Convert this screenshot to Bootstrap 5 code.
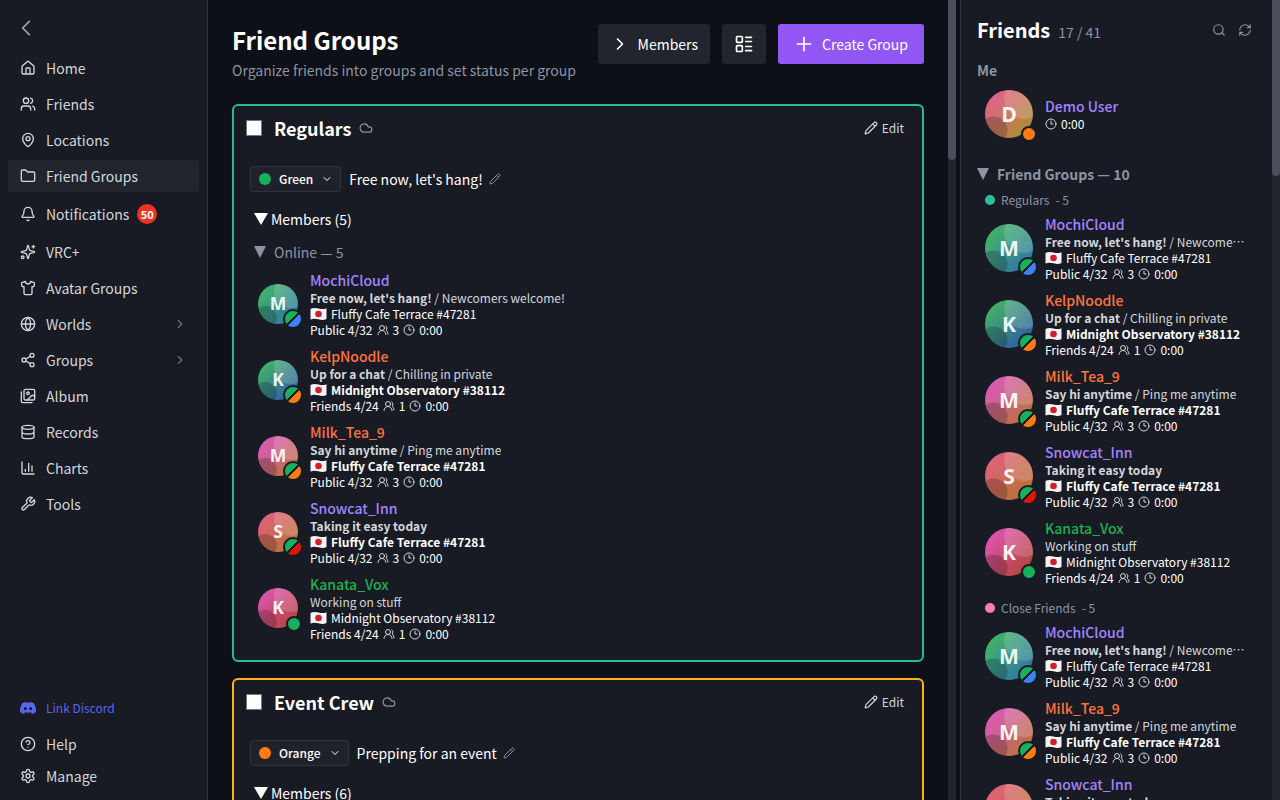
<!DOCTYPE html>
<html lang="en" data-bs-theme="dark">
<head>
<meta charset="utf-8">
<meta name="viewport" content="width=device-width, initial-scale=1">
<title>Friend Groups</title>
<link href="https://cdn.jsdelivr.net/npm/bootstrap@5.3.0/dist/css/bootstrap.min.css" rel="stylesheet">
<style>
:root{--panel:#181b23;--base:#0d1017;--raised:#22252d;--line:#30333c;--muted:#8d93a3;--soft:#d4d6dc}
body{font-family:"Noto Sans CJK JP",sans-serif;font-size:14px;line-height:20px;background:var(--base);color:#fff}
h1,h2,h3,p{margin:0}
.ico{width:16px;height:16px;flex:none;fill:none;stroke:currentColor;stroke-width:2;stroke-linecap:round;stroke-linejoin:round}
.ico-14{width:14px;height:14px}
.ico-12{width:12px;height:12px}
.ico-20{width:20px;height:20px}
.ico-solid{fill:currentColor;stroke:none}
.tri{width:14px;height:12px;flex:none;fill:currentColor}
.tri-sm{width:12px}
.plain{background:none;border:0;padding:0}
.soft{color:var(--soft)}
.muted{color:var(--muted)}

.side{width:208px;background:var(--panel);border-right:1px solid var(--line);padding:16px 8px 8px}
.collapse-btn{height:24px;margin-bottom:8px;color:#a2a5af}
.side-link{display:flex;align-items:center;gap:10px;min-height:32px;padding:0 12px;border-radius:3px;color:var(--soft);text-decoration:none}
.side-link.active{background:var(--raised)}
.side-link.tall{min-height:36px}
.side-link.discord{color:#5865f2;font-size:12px}
.chev{color:#6c707c}
.count{width:20px;height:20px;border-radius:50%;background:#ee3324;color:#fff;font-size:11px;font-weight:700;line-height:20px;text-align:center;margin-left:-2px}

.scroller{overflow-y:auto;scrollbar-width:none;min-width:0}
.scroller::-webkit-scrollbar{display:none}
.rail{width:8px;flex:none;background:#22252d}
.rail-thumb{background:#4a4f5b;border-radius:0 0 4px 4px}
.rail-main{margin-right:4px}

.head-title{font-size:24px;line-height:32px;font-weight:700}
.head-text{line-height:24px;padding-top:2px;margin-bottom:-2px}
.head-btns{gap:12px}
.head-btn{height:40px;border:0;border-radius:3px;background:var(--raised);color:#fff;display:flex;align-items:center;gap:8px;padding:0 12px;white-space:nowrap}
.head-btn.primary{background:#9256f5;padding:0 16px}
.group-card{background:var(--panel);border:2px solid var(--edge);border-radius:6px;padding:0 16px 14px}
.group-head{height:44px;margin:0 2px 0 -4px}
.group-name{font-size:18px;line-height:24px;font-weight:700}
.edit-btn{font-size:12px}
.tick{appearance:none;width:16px;height:16px;background:#fff;border:1px solid #767676;margin:0;flex:none}
.status-btn{height:26px;padding:0 7px 0 8px;border:1px solid var(--line);border-radius:3px;background:#1f222a;color:#fff;font-size:12px;font-weight:500;display:flex;align-items:center;gap:8px}
.status-row{height:48px;padding-top:10px;margin-bottom:11px;gap:8px}
.status-text{gap:6px}
.dot{width:12px;height:12px;border-radius:50%;flex:none;background:currentColor}
.dot-sm{width:10px;height:10px}
details>summary{list-style:none;display:flex;align-items:center}
details>summary::-webkit-details-marker{display:none}
.members{gap:3px}
.online{margin-top:13px}
.list-main{margin-top:4px}

.friend{display:flex;align-items:center;gap:12px;padding:4px 8px;font-size:12px;line-height:16px}
.face{position:relative;width:40px;height:40px;flex:none}
.face>svg{display:block;width:100%;height:100%}
.face text{font-family:"Open Sans",sans-serif;font-size:44px;font-weight:700;fill:#fff;fill-opacity:.92;text-anchor:middle}
.friends .face{width:48px;height:48px}
.state{position:absolute;right:-4px;bottom:-4px;width:16px;height:16px;border-radius:50%;border:2px solid var(--panel);background:currentColor}
.state.split{right:-5px;bottom:-5px;width:20px;height:20px;background:linear-gradient(135deg,#17b05e 0 45%,var(--panel) 46% 54%,currentColor 55%)}
.who{font-size:14px;line-height:20px;font-weight:500}
.info{min-width:0}
.place,.meta{display:flex;align-items:center;gap:4px;white-space:nowrap}
.flag{width:17px;height:16px;flex:none}
.green{color:#17b05e}.blue{color:#3b82f6}.orange{color:#ff7b14}.red{color:#e01507}
.known{color:#a284ff}.trusted{color:#ff7340}.newer{color:#1eb04c}

.friends{width:320px;flex:none;background:var(--panel);border-left:1px solid var(--line)}
.friends-title{font-size:20px;line-height:28px;font-weight:700}
.me-label{font-size:14px;line-height:20px;font-weight:700;margin:16px 0 6px}
.me-row{margin-bottom:21px}
.set-title{line-height:22px;font-weight:700}
.sub{font-size:12px;line-height:18px;padding:6px 8px 1px;gap:6px}
.group-set{margin-bottom:3px}
</style>
<script src="https://cdn.jsdelivr.net/npm/bootstrap@5.3.0/dist/js/bootstrap.bundle.min.js" defer></script>
</head>
<body class="vh-100 overflow-hidden">
<svg class="position-absolute" width="0" height="0" aria-hidden="true">
<defs>
<linearGradient id="gm" x2="1" y2="1"><stop offset=".1" stop-color="#43b563"/><stop offset=".9" stop-color="#2f74a6"/></linearGradient>
<linearGradient id="gk" x2="1" y2="1"><stop offset=".1" stop-color="#43b563"/><stop offset=".9" stop-color="#2e5aa8"/></linearGradient>
<linearGradient id="gt" x2="1" y2="1"><stop offset=".1" stop-color="#dc58bd"/><stop offset=".9" stop-color="#b8743a"/></linearGradient>
<linearGradient id="gs" x2="1" y2="1"><stop offset=".1" stop-color="#e2607c"/><stop offset=".9" stop-color="#b57434"/></linearGradient>
<linearGradient id="gv" x2="1" y2="1"><stop offset=".1" stop-color="#de55b6"/><stop offset=".9" stop-color="#b54438"/></linearGradient>
<linearGradient id="gd" x2="1" y2="1"><stop offset=".1" stop-color="#e46090"/><stop offset=".9" stop-color="#ab8e2e"/></linearGradient>
<clipPath id="disc"><circle cx="50" cy="50" r="50"/></clipPath>
</defs>
<symbol id="shade" viewBox="0 0 100 100"><g clip-path="url(#disc)"><circle cx="82" cy="18" r="42" fill="#fff" opacity=".17"/><circle cx="18" cy="84" r="29" fill="#000" opacity=".2"/></g></symbol>
<symbol id="home" viewBox="0 0 24 24"><path d="M15 21v-8a1 1 0 0 0-1-1h-4a1 1 0 0 0-1 1v8M3 10a2 2 0 0 1 .709-1.528l7-5.999a2 2 0 0 1 2.582 0l7 5.999A2 2 0 0 1 21 10v9a2 2 0 0 1-2 2H5a2 2 0 0 1-2-2z"/></symbol>
<symbol id="users" viewBox="0 0 24 24"><path d="M16 21v-2a4 4 0 0 0-4-4H6a4 4 0 0 0-4 4v2M22 21v-2a4 4 0 0 0-3-3.87M16 3.13a4 4 0 0 1 0 7.75"/><circle cx="9" cy="7" r="4"/></symbol>
<symbol id="people" viewBox="0 0 24 24"><path d="M18 21a8 8 0 0 0-16 0M22 20c0-3.37-2-6.5-4-8a5 5 0 0 0-.45-8.3"/><circle cx="10" cy="8" r="5"/></symbol>
<symbol id="pin" viewBox="0 0 24 24"><path d="M20 10c0 4.993-5.539 10.193-7.399 11.799a1 1 0 0 1-1.202 0C9.539 20.193 4 14.993 4 10a8 8 0 0 1 16 0"/><circle cx="12" cy="10" r="3"/></symbol>
<symbol id="folder" viewBox="0 0 24 24"><path d="M20 20a2 2 0 0 0 2-2V8a2 2 0 0 0-2-2h-7.9a2 2 0 0 1-1.69-.9L9.6 3.9A2 2 0 0 0 7.93 3H4a2 2 0 0 0-2 2v13a2 2 0 0 0 2 2Z"/></symbol>
<symbol id="bell" viewBox="0 0 24 24"><path d="M10.268 21a2 2 0 0 0 3.464 0M3.262 15.326A1 1 0 0 0 4 17h16a1 1 0 0 0 .74-1.673C19.41 13.956 18 12.499 18 8A6 6 0 0 0 6 8c0 4.499-1.411 5.956-2.738 7.326"/></symbol>
<symbol id="sparkles" viewBox="0 0 24 24"><path d="M9.937 15.5A2 2 0 0 0 8.5 14.063l-6.135-1.582a.5.5 0 0 1 0-.962L8.5 9.936A2 2 0 0 0 9.937 8.5l1.582-6.135a.5.5 0 0 1 .963 0L14.063 8.5A2 2 0 0 0 15.5 9.937l6.135 1.581a.5.5 0 0 1 0 .964L15.5 14.063a2 2 0 0 0-1.437 1.437l-1.582 6.135a.5.5 0 0 1-.963 0zM20 2v4M22 4h-4"/><circle cx="4" cy="20" r="2"/></symbol>
<symbol id="shirt" viewBox="0 0 24 24"><path d="M20.38 3.46 16 2a4 4 0 0 1-8 0L3.62 3.46a2 2 0 0 0-1.34 2.23l.58 3.47a1 1 0 0 0 .99.84H6v10c0 1.1.9 2 2 2h8a2 2 0 0 0 2-2V10h2.15a1 1 0 0 0 .99-.84l.58-3.47a2 2 0 0 0-1.34-2.23z"/></symbol>
<symbol id="globe" viewBox="0 0 24 24"><circle cx="12" cy="12" r="10"/><path d="M12 2a14.5 14.5 0 0 0 0 20 14.5 14.5 0 0 0 0-20M2 12h20"/></symbol>
<symbol id="share" viewBox="0 0 24 24"><circle cx="18" cy="5" r="3"/><circle cx="6" cy="12" r="3"/><circle cx="18" cy="19" r="3"/><path d="m8.59 13.51 6.83 3.98M15.41 6.51l-6.82 3.98"/></symbol>
<symbol id="images" viewBox="0 0 24 24"><path d="M18 22H4a2 2 0 0 1-2-2V6M22 13l-1.296-1.296a2.41 2.41 0 0 0-3.408 0L11 18"/><circle cx="12" cy="8" r="2"/><rect width="16" height="16" x="6" y="2" rx="2"/></symbol>
<symbol id="database" viewBox="0 0 24 24"><ellipse cx="12" cy="5" rx="9" ry="3"/><path d="M3 5v14a9 3 0 0 0 18 0V5M3 12a9 3 0 0 0 18 0"/></symbol>
<symbol id="chart" viewBox="0 0 24 24"><path d="M3 3v16a2 2 0 0 0 2 2h16M18 17V9M13 17V5M8 17v-3"/></symbol>
<symbol id="wrench" viewBox="0 0 24 24"><path d="M14.7 6.3a1 1 0 0 0 0 1.4l1.6 1.6a1 1 0 0 0 1.4 0l3.77-3.77a6 6 0 0 1-7.94 7.94l-6.91 6.91a2.12 2.12 0 0 1-3-3l6.91-6.91a6 6 0 0 1 7.94-7.94l-3.76 3.76z"/></symbol>
<symbol id="help" viewBox="0 0 24 24"><circle cx="12" cy="12" r="10"/><path d="M9.09 9a3 3 0 0 1 5.83 1c0 2-3 3-3 3M12 17h.01"/></symbol>
<symbol id="gear" viewBox="0 0 24 24"><path d="M12.22 2h-.44a2 2 0 0 0-2 2v.18a2 2 0 0 1-1 1.73l-.43.25a2 2 0 0 1-2 0l-.15-.08a2 2 0 0 0-2.73.73l-.22.38a2 2 0 0 0 .73 2.73l.15.1a2 2 0 0 1 1 1.72v.51a2 2 0 0 1-1 1.74l-.15.09a2 2 0 0 0-.73 2.73l.22.38a2 2 0 0 0 2.73.73l.15-.08a2 2 0 0 1 2 0l.43.25a2 2 0 0 1 1 1.73V20a2 2 0 0 0 2 2h.44a2 2 0 0 0 2-2v-.18a2 2 0 0 1 1-1.73l.43-.25a2 2 0 0 1 2 0l.15.08a2 2 0 0 0 2.73-.73l.22-.39a2 2 0 0 0-.73-2.73l-.15-.08a2 2 0 0 1-1-1.74v-.5a2 2 0 0 1 1-1.74l.15-.09a2 2 0 0 0 .73-2.73l-.22-.38a2 2 0 0 0-2.73-.73l-.15.08a2 2 0 0 1-2 0l-.43-.25a2 2 0 0 1-1-1.73V4a2 2 0 0 0-2-2z"/><circle cx="12" cy="12" r="3"/></symbol>
<symbol id="discord" viewBox="0 0 24 24"><path d="M20.317 4.3698a19.7913 19.7913 0 00-4.8851-1.5152.0741.0741 0 00-.0785.0371c-.211.3753-.4447.8648-.6083 1.2495-1.8447-.2762-3.68-.2762-5.4868 0-.1636-.3933-.4058-.8742-.6177-1.2495a.077.077 0 00-.0785-.037 19.7363 19.7363 0 00-4.8852 1.515.0699.0699 0 00-.0321.0277C.5334 9.0458-.319 13.5799.0992 18.0578a.0824.0824 0 00.0312.0561c2.0528 1.5076 4.0413 2.4228 5.9929 3.0294a.0777.0777 0 00.0842-.0276c.4616-.6304.8731-1.2952 1.226-1.9942a.076.076 0 00-.0416-.1057c-.6528-.2476-1.2743-.5495-1.8722-.8923a.077.077 0 01-.0076-.1277c.1258-.0943.2517-.1923.3718-.2914a.0743.0743 0 01.0776-.0105c3.9278 1.7933 8.18 1.7933 12.0614 0a.0739.0739 0 01.0785.0095c.1202.099.246.1981.3728.2924a.077.077 0 01-.0066.1276 12.2986 12.2986 0 01-1.873.8914.0766.0766 0 00-.0407.1067c.3604.698.7719 1.3628 1.225 1.9932a.076.076 0 00.0842.0286c1.961-.6067 3.9495-1.5219 6.0023-3.0294a.077.077 0 00.0313-.0552c.5004-5.177-.8382-9.6739-3.5485-13.6604a.061.061 0 00-.0312-.0286zM8.02 15.3312c-1.1825 0-2.1569-1.0857-2.1569-2.419 0-1.3332.9555-2.4189 2.157-2.4189 1.2108 0 2.1757 1.0952 2.1568 2.419 0 1.3332-.9555 2.4189-2.1569 2.4189zm7.9748 0c-1.1825 0-2.1569-1.0857-2.1569-2.419 0-1.3332.9554-2.4189 2.1569-2.4189 1.2108 0 2.1757 1.0952 2.1568 2.419 0 1.3332-.946 2.4189-2.1568 2.4189Z"/></symbol>
<symbol id="left" viewBox="0 0 24 24"><path d="m16 20-8-8 8-8"/></symbol>
<symbol id="right" viewBox="0 0 24 24"><path d="m9 18 6-6-6-6"/></symbol>
<symbol id="down" viewBox="0 0 24 24"><path d="m6 9 6 6 6-6"/></symbol>
<symbol id="plus" viewBox="0 0 24 24"><path d="M4 12h16M12 4v16"/></symbol>
<symbol id="layout" viewBox="0 0 24 24"><rect width="7" height="7" x="3" y="3" rx="1"/><rect width="7" height="7" x="3" y="14" rx="1"/><path d="M14 4h7M14 9h7M14 15h7M14 20h7"/></symbol>
<symbol id="cloud" viewBox="0 0 24 24"><path d="M17.5 19H9a7 7 0 1 1 6.71-9h1.79a4.5 4.5 0 1 1 0 9Z"/></symbol>
<symbol id="pencil" viewBox="0 0 24 24"><path d="M21.174 6.812a1 1 0 0 0-3.986-3.987L3.842 16.174a2 2 0 0 0-.5.83l-1.321 4.352a.5.5 0 0 0 .623.622l4.353-1.32a2 2 0 0 0 .83-.497zM15 5l4 4"/></symbol>
<symbol id="search" viewBox="0 0 24 24"><circle cx="11" cy="11" r="8"/><path d="m21 21-4.3-4.3"/></symbol>
<symbol id="refresh" viewBox="0 0 24 24"><path d="M3 12a9 9 0 0 1 9-9 9.75 9.75 0 0 1 6.74 2.74L21 8M21 3v5h-5M21 12a9 9 0 0 1-9 9 9.75 9.75 0 0 1-6.74-2.74L3 16M8 16H3v5"/></symbol>
<symbol id="clock" viewBox="0 0 24 24"><circle cx="12" cy="12" r="10"/><path d="M12 6v6h4"/></symbol>
<symbol id="tri" viewBox="0 0 14 12" preserveAspectRatio="none"><path d="M0 0h14L7 12z"/></symbol>
<symbol id="jp" viewBox="0 0 17 16"><path d="M.5 3C3 1.500 5.500 1.700 8.500 2.500s5.500.8 8-.3v10.800c-2.500 1.300-5 1.100-8 .3s-5.500-.9-8 .3z" fill="#f4f4f6"/><circle cx="8.500" cy="8" r="3.300" fill="#d0202e"/></symbol>
</svg>

<div class="d-flex h-100">
<nav class="side d-flex flex-column flex-shrink-0" aria-label="Main">
  <button class="plain collapse-btn d-flex align-items-center ps-2" aria-label="Collapse"><svg class="ico ico-20"><use href="#left"/></svg></button>
  <div class="d-flex flex-column gap-1 mt-1">
    <a class="side-link" href="#"><svg class="ico"><use href="#home"/></svg>Home</a>
    <a class="side-link" href="#"><svg class="ico"><use href="#users"/></svg>Friends</a>
    <a class="side-link" href="#"><svg class="ico"><use href="#pin"/></svg>Locations</a>
    <a class="side-link active" href="#"><svg class="ico"><use href="#folder"/></svg>Friend Groups</a>
    <a class="side-link tall" href="#"><svg class="ico"><use href="#bell"/></svg>Notifications<span class="count">50</span></a>
    <a class="side-link" href="#"><svg class="ico"><use href="#sparkles"/></svg>VRC+</a>
    <a class="side-link" href="#"><svg class="ico"><use href="#shirt"/></svg>Avatar Groups</a>
    <a class="side-link" href="#"><svg class="ico"><use href="#globe"/></svg>Worlds<svg class="ico ico-14 chev ms-auto"><use href="#right"/></svg></a>
    <a class="side-link" href="#"><svg class="ico"><use href="#share"/></svg>Groups<svg class="ico ico-14 chev ms-auto"><use href="#right"/></svg></a>
    <a class="side-link" href="#"><svg class="ico"><use href="#images"/></svg>Album</a>
    <a class="side-link" href="#"><svg class="ico"><use href="#database"/></svg>Records</a>
    <a class="side-link" href="#"><svg class="ico"><use href="#chart"/></svg>Charts</a>
    <a class="side-link" href="#"><svg class="ico"><use href="#wrench"/></svg>Tools</a>
  </div>
  <div class="mt-auto">
    <a class="side-link discord mb-1" href="#"><svg class="ico ico-solid"><use href="#discord"/></svg>Link Discord</a>
    <a class="side-link" href="#"><svg class="ico"><use href="#help"/></svg>Help</a>
    <a class="side-link" href="#"><svg class="ico"><use href="#gear"/></svg>Manage</a>
  </div>
</nav>

<main class="scroller flex-grow-1 p-4">
  <header class="d-flex align-items-start justify-content-between mb-4">
    <div><h1 class="head-title">Friend Groups</h1><p class="head-text muted">Organize friends into groups and set status per group</p></div>
    <div class="head-btns d-flex">
      <button class="head-btn"><svg class="ico ico-20"><use href="#right"/></svg>Members</button>
      <button class="head-btn" aria-label="Layout"><svg class="ico ico-20"><use href="#layout"/></svg></button>
      <button class="head-btn primary"><svg class="ico ico-20"><use href="#plus"/></svg>Create Group</button>
    </div>
  </header>

  <section class="group-card mb-3" style="--edge:#27b999">
    <div class="group-head d-flex align-items-center">
      <input class="tick" type="checkbox" aria-label="Select Regulars"><h2 class="group-name ms-2 ps-1 me-2">Regulars</h2><svg class="ico ico-14 muted"><use href="#cloud"/></svg>
      <button class="plain soft edit-btn d-flex align-items-center gap-1 ms-auto"><svg class="ico ico-14"><use href="#pencil"/></svg>Edit</button>
    </div>
    <div class="status-row d-flex align-items-center">
      <button class="status-btn"><span class="dot green"></span>Green<svg class="ico ico-12"><use href="#down"/></svg></button>
      <div class="status-text d-flex align-items-center">Free now, let's hang!<button class="plain muted d-flex" aria-label="Edit status"><svg class="ico ico-12"><use href="#pencil"/></svg></button></div>
    </div>
    <details open><summary class="members ps-1"><svg class="tri"><use href="#tri"/></svg>Members (5)</summary>
      <details open><summary class="muted ps-1 gap-2 online"><svg class="tri tri-sm"><use href="#tri"/></svg>Online — 5</summary>
      <div class="list-main">
        <article class="friend"><div class="face"><svg viewBox="0 0 100 100"><circle cx="50" cy="50" r="50" fill="url(#gm)"/><use href="#shade"/><text x="50" y="66">M</text></svg><span class="state split blue"></span></div>
          <div class="info"><div class="who known">MochiCloud</div><div class="soft text-truncate"><b>Free now, let's hang!</b> / Newcomers welcome!</div><div class="place"><svg class="flag"><use href="#jp"/></svg>Fluffy Cafe Terrace #47281</div><div class="meta">Public 4/32<svg class="ico ico-12 soft"><use href="#people"/></svg>3<svg class="ico ico-12 soft"><use href="#clock"/></svg>0:00</div></div></article>
        <article class="friend"><div class="face"><svg viewBox="0 0 100 100"><circle cx="50" cy="50" r="50" fill="url(#gk)"/><use href="#shade"/><text x="50" y="66">K</text></svg><span class="state split orange"></span></div>
          <div class="info"><div class="who trusted">KelpNoodle</div><div class="soft text-truncate"><b>Up for a chat</b> / Chilling in private</div><div class="place fw-bold"><svg class="flag"><use href="#jp"/></svg>Midnight Observatory #38112</div><div class="meta">Friends 4/24<svg class="ico ico-12 soft"><use href="#people"/></svg>1<svg class="ico ico-12 soft"><use href="#clock"/></svg>0:00</div></div></article>
        <article class="friend"><div class="face"><svg viewBox="0 0 100 100"><circle cx="50" cy="50" r="50" fill="url(#gt)"/><use href="#shade"/><text x="50" y="66">M</text></svg><span class="state split orange"></span></div>
          <div class="info"><div class="who trusted">Milk_Tea_9</div><div class="soft text-truncate"><b>Say hi anytime</b> / Ping me anytime</div><div class="place fw-bold"><svg class="flag"><use href="#jp"/></svg>Fluffy Cafe Terrace #47281</div><div class="meta">Public 4/32<svg class="ico ico-12 soft"><use href="#people"/></svg>3<svg class="ico ico-12 soft"><use href="#clock"/></svg>0:00</div></div></article>
        <article class="friend"><div class="face"><svg viewBox="0 0 100 100"><circle cx="50" cy="50" r="50" fill="url(#gs)"/><use href="#shade"/><text x="50" y="66">S</text></svg><span class="state split red"></span></div>
          <div class="info"><div class="who known">Snowcat_Inn</div><div class="soft text-truncate"><b>Taking it easy today</b></div><div class="place fw-bold"><svg class="flag"><use href="#jp"/></svg>Fluffy Cafe Terrace #47281</div><div class="meta">Public 4/32<svg class="ico ico-12 soft"><use href="#people"/></svg>3<svg class="ico ico-12 soft"><use href="#clock"/></svg>0:00</div></div></article>
        <article class="friend"><div class="face"><svg viewBox="0 0 100 100"><circle cx="50" cy="50" r="50" fill="url(#gv)"/><use href="#shade"/><text x="50" y="66">K</text></svg><span class="state green"></span></div>
          <div class="info"><div class="who newer">Kanata_Vox</div><div class="soft text-truncate">Working on stuff</div><div class="place"><svg class="flag"><use href="#jp"/></svg>Midnight Observatory #38112</div><div class="meta">Friends 4/24<svg class="ico ico-12 soft"><use href="#people"/></svg>1<svg class="ico ico-12 soft"><use href="#clock"/></svg>0:00</div></div></article>
      </div>
      </details>
    </details>
  </section>

  <section class="group-card" style="--edge:#ffb020">
    <div class="group-head d-flex align-items-center">
      <input class="tick" type="checkbox" aria-label="Select Event Crew"><h2 class="group-name ms-2 ps-1 me-2">Event Crew</h2><svg class="ico ico-14 muted"><use href="#cloud"/></svg>
      <button class="plain soft edit-btn d-flex align-items-center gap-1 ms-auto"><svg class="ico ico-14"><use href="#pencil"/></svg>Edit</button>
    </div>
    <div class="status-row d-flex align-items-center">
      <button class="status-btn"><span class="dot orange"></span>Orange<svg class="ico ico-12"><use href="#down"/></svg></button>
      <div class="status-text d-flex align-items-center">Prepping for an event<button class="plain muted d-flex" aria-label="Edit status"><svg class="ico ico-12"><use href="#pencil"/></svg></button></div>
    </div>
    <details><summary class="members ps-1"><svg class="tri"><use href="#tri"/></svg>Members (6)</summary></details>
  </section>
</main>
<div class="rail rail-main"><div class="rail-thumb" style="height:20%"></div></div>

<aside class="friends d-flex">
  <div class="scroller flex-grow-1 p-3">
    <header class="d-flex align-items-center"><h2 class="friends-title me-2">Friends</h2><span class="muted pt-1">17 / 41</span>
      <button class="plain muted d-flex ms-auto" aria-label="Search"><svg class="ico ico-14"><use href="#search"/></svg></button><button class="plain muted d-flex mx-1 ps-2" aria-label="Refresh"><svg class="ico ico-14"><use href="#refresh"/></svg></button></header>
    <h3 class="muted me-label">Me</h3>
    <article class="friend me-row"><div class="face"><svg viewBox="0 0 100 100"><circle cx="50" cy="50" r="50" fill="url(#gd)"/><use href="#shade"/><text x="50" y="66">D</text></svg><span class="state orange"></span></div>
      <div class="info"><div class="who known">Demo User</div><div class="meta"><svg class="ico ico-12 soft"><use href="#clock"/></svg>0:00</div></div></article>
    <details open><summary class="muted gap-2 set-title"><svg class="tri tri-sm"><use href="#tri"/></svg>Friend Groups — 10</summary>
      <div class="group-set">
        <div class="sub muted d-flex align-items-center"><span class="dot dot-sm" style="color:#2bbd9f"></span>Regulars<span>- 5</span></div>
        <article class="friend"><div class="face"><svg viewBox="0 0 100 100"><circle cx="50" cy="50" r="50" fill="url(#gm)"/><use href="#shade"/><text x="50" y="66">M</text></svg><span class="state split blue"></span></div>
          <div class="info"><div class="who known">MochiCloud</div><div class="soft text-truncate"><b>Free now, let's hang!</b> / Newcomers welcome!</div><div class="place"><svg class="flag"><use href="#jp"/></svg>Fluffy Cafe Terrace #47281</div><div class="meta">Public 4/32<svg class="ico ico-12 soft"><use href="#people"/></svg>3<svg class="ico ico-12 soft"><use href="#clock"/></svg>0:00</div></div></article>
        <article class="friend"><div class="face"><svg viewBox="0 0 100 100"><circle cx="50" cy="50" r="50" fill="url(#gk)"/><use href="#shade"/><text x="50" y="66">K</text></svg><span class="state split orange"></span></div>
          <div class="info"><div class="who trusted">KelpNoodle</div><div class="soft text-truncate"><b>Up for a chat</b> / Chilling in private</div><div class="place fw-bold"><svg class="flag"><use href="#jp"/></svg>Midnight Observatory #38112</div><div class="meta">Friends 4/24<svg class="ico ico-12 soft"><use href="#people"/></svg>1<svg class="ico ico-12 soft"><use href="#clock"/></svg>0:00</div></div></article>
        <article class="friend"><div class="face"><svg viewBox="0 0 100 100"><circle cx="50" cy="50" r="50" fill="url(#gt)"/><use href="#shade"/><text x="50" y="66">M</text></svg><span class="state split orange"></span></div>
          <div class="info"><div class="who trusted">Milk_Tea_9</div><div class="soft text-truncate"><b>Say hi anytime</b> / Ping me anytime</div><div class="place fw-bold"><svg class="flag"><use href="#jp"/></svg>Fluffy Cafe Terrace #47281</div><div class="meta">Public 4/32<svg class="ico ico-12 soft"><use href="#people"/></svg>3<svg class="ico ico-12 soft"><use href="#clock"/></svg>0:00</div></div></article>
        <article class="friend"><div class="face"><svg viewBox="0 0 100 100"><circle cx="50" cy="50" r="50" fill="url(#gs)"/><use href="#shade"/><text x="50" y="66">S</text></svg><span class="state split red"></span></div>
          <div class="info"><div class="who known">Snowcat_Inn</div><div class="soft text-truncate"><b>Taking it easy today</b></div><div class="place fw-bold"><svg class="flag"><use href="#jp"/></svg>Fluffy Cafe Terrace #47281</div><div class="meta">Public 4/32<svg class="ico ico-12 soft"><use href="#people"/></svg>3<svg class="ico ico-12 soft"><use href="#clock"/></svg>0:00</div></div></article>
        <article class="friend"><div class="face"><svg viewBox="0 0 100 100"><circle cx="50" cy="50" r="50" fill="url(#gv)"/><use href="#shade"/><text x="50" y="66">K</text></svg><span class="state green"></span></div>
          <div class="info"><div class="who newer">Kanata_Vox</div><div class="soft text-truncate">Working on stuff</div><div class="place"><svg class="flag"><use href="#jp"/></svg>Midnight Observatory #38112</div><div class="meta">Friends 4/24<svg class="ico ico-12 soft"><use href="#people"/></svg>1<svg class="ico ico-12 soft"><use href="#clock"/></svg>0:00</div></div></article>
      </div>
      <div class="group-set">
        <div class="sub muted d-flex align-items-center"><span class="dot dot-sm" style="color:#ff7eb0"></span>Close Friends<span>- 5</span></div>
        <article class="friend"><div class="face"><svg viewBox="0 0 100 100"><circle cx="50" cy="50" r="50" fill="url(#gm)"/><use href="#shade"/><text x="50" y="66">M</text></svg><span class="state split blue"></span></div>
          <div class="info"><div class="who known">MochiCloud</div><div class="soft text-truncate"><b>Free now, let's hang!</b> / Newcomers welcome!</div><div class="place"><svg class="flag"><use href="#jp"/></svg>Fluffy Cafe Terrace #47281</div><div class="meta">Public 4/32<svg class="ico ico-12 soft"><use href="#people"/></svg>3<svg class="ico ico-12 soft"><use href="#clock"/></svg>0:00</div></div></article>
        <article class="friend"><div class="face"><svg viewBox="0 0 100 100"><circle cx="50" cy="50" r="50" fill="url(#gt)"/><use href="#shade"/><text x="50" y="66">M</text></svg><span class="state split orange"></span></div>
          <div class="info"><div class="who trusted">Milk_Tea_9</div><div class="soft text-truncate"><b>Say hi anytime</b> / Ping me anytime</div><div class="place fw-bold"><svg class="flag"><use href="#jp"/></svg>Fluffy Cafe Terrace #47281</div><div class="meta">Public 4/32<svg class="ico ico-12 soft"><use href="#people"/></svg>3<svg class="ico ico-12 soft"><use href="#clock"/></svg>0:00</div></div></article>
        <article class="friend"><div class="face"><svg viewBox="0 0 100 100"><circle cx="50" cy="50" r="50" fill="url(#gs)"/><use href="#shade"/><text x="50" y="66">S</text></svg><span class="state split red"></span></div>
          <div class="info"><div class="who known">Snowcat_Inn</div><div class="soft text-truncate"><b>Taking it easy today</b></div><div class="place fw-bold"><svg class="flag"><use href="#jp"/></svg>Fluffy Cafe Terrace #47281</div><div class="meta">Public 4/32<svg class="ico ico-12 soft"><use href="#people"/></svg>3<svg class="ico ico-12 soft"><use href="#clock"/></svg>0:00</div></div></article>
      </div>
    </details>
  </div>
  <div class="rail"><div class="rail-thumb" style="height:22%"></div></div>
</aside>
</div>
</body>
</html>
